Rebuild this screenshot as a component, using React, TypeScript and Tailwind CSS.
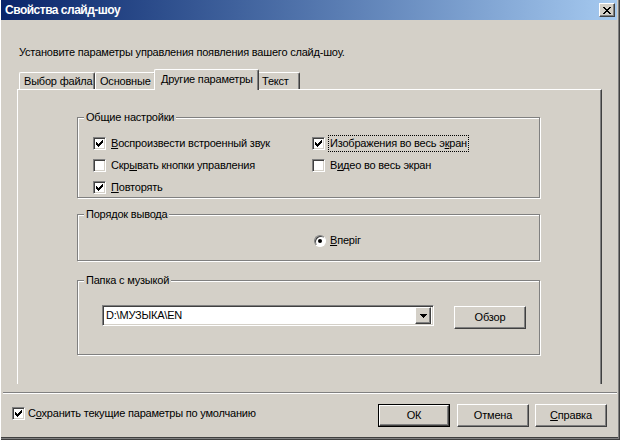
import type { ReactNode } from "react";

const raised =
  "border border-t-white border-l-white border-r-[#404040] border-b-[#404040] shadow-[inset_-1px_-1px_0_#808080]";
const sunken =
  "border border-t-[#808080] border-l-[#808080] border-r-white border-b-white shadow-[inset_1px_1px_0_#404040,inset_-1px_-1px_0_#d4d0c8]";

function CheckMark() {
  return (
    <svg width="7" height="7" viewBox="0 0 7 7" shapeRendering="crispEdges">
      <path
        d="M0 2h1v3h-1zM1 3h1v3h-1zM2 4h1v3h-1zM3 3h1v3h-1zM4 2h1v3h-1zM5 1h1v3h-1zM6 0h1v3h-1z"
        fill="#000"
      />
    </svg>
  );
}

function Box({ checked }: { checked?: boolean }) {
  return (
    <span
      className={`flex h-[13px] w-[13px] shrink-0 items-center justify-center bg-white ${sunken}`}
    >
      {checked && <CheckMark />}
    </span>
  );
}

function CheckRow({
  checked,
  focused,
  children,
}: {
  checked?: boolean;
  focused?: boolean;
  children: ReactNode;
}) {
  return (
    <div className="flex h-[17px] items-center gap-[3px]">
      <Box checked={checked} />
      <span
        className={`whitespace-nowrap border px-[1px] leading-[15px] ${
          focused ? "border-dotted border-black" : "border-transparent"
        }`}
      >
        {children}
      </span>
    </div>
  );
}

function Group({
  title,
  className,
  children,
}: {
  title: string;
  className: string;
  children: ReactNode;
}) {
  return (
    <fieldset
      className={`w-[463px] border border-[#808080] shadow-[1px_1px_0_#ffffff,inset_1px_1px_0_#ffffff] ${className}`}
    >
      <legend className="ml-[6px] bg-[#d4d0c8] px-[2px] leading-[13px]">{title}</legend>
      {children}
    </fieldset>
  );
}

function Button({ children, isDefault }: { children: ReactNode; isDefault?: boolean }) {
  if (isDefault) {
    return (
      <div className="h-[23px] w-[72px] border border-black">
        <div className={`flex h-full w-full items-center justify-center ${raised}`}>
          {children}
        </div>
      </div>
    );
  }
  return (
    <div className={`flex h-[23px] w-[72px] items-center justify-center ${raised}`}>
      {children}
    </div>
  );
}

function Tab({ label, active, w }: { label: string; active?: boolean; w: string }) {
  return (
    <div
      className={`flex items-start whitespace-nowrap rounded-t-[2px] border-t border-l border-white border-r border-r-[#404040] bg-[#d4d0c8] shadow-[inset_-1px_0_0_#808080] ${w} ${
        active
          ? "relative z-10 -mx-[2px] -mb-px h-[21px] pl-[6px] pt-[3px]"
          : "h-[17px] pl-[4px] pt-[2px]"
      }`}
    >
      {label}
    </div>
  );
}

export default function App() {
  return (
    <div className="flex h-[440px] w-[620px] flex-col bg-[#d4d0c8] font-['Liberation_Sans',Arial,sans-serif] text-[11px] leading-[13px] tracking-[-0.2px] text-black shadow-[inset_1px_0_0_#ffffff,inset_-1px_-1px_0_#404040,inset_-2px_-2px_0_#808080,inset_0_-3px_0_#404040]">
      <div className="ml-[1px] mr-[3px] flex h-[20px] items-center justify-between bg-linear-to-r from-[#0a246a] to-[#a6caf0] pl-[4px] pr-[2px]">
        <span className="text-[12px] font-bold tracking-[-0.5px] text-white">
          Свойства слайд-шоу
        </span>
        <div className={`flex h-[14px] w-[16px] items-center justify-center bg-[#d4d0c8] ${raised}`}>
          <svg width="8" height="7" viewBox="0 0 8 7" shapeRendering="crispEdges">
            <path
              d="M0 0h2v1h-2zM6 0h2v1h-2zM1 1h2v1h-2zM5 1h2v1h-2zM2 2h4v1h-4zM3 3h2v1h-2zM2 4h4v1h-4zM1 5h2v1h-2zM5 5h2v1h-2zM0 6h2v1h-2zM6 6h2v1h-2z"
              fill="#000"
            />
          </svg>
        </div>
      </div>

      <p className="ml-[19px] mt-[26px]">
        Установите параметры управления появления вашего слайд-шоу.
      </p>

      <div className="ml-[17px] mt-[10px] flex w-[585px] flex-col">
        <div className="flex h-[20px] items-end pl-[2px]">
          <Tab label="Выбор файла" w="w-[76px]" />
          <Tab label="Основные" w="w-[61px]" />
          <Tab label="Другие параметры" w="w-[105px]" active />
          <Tab label="Текст" w="w-[43px]" />
        </div>
        <div className="h-[295px] border-t border-l border-white border-r border-r-[#404040] pl-[59px] shadow-[inset_-1px_0_0_#808080]">
          <Group title="Общие настройки" className="mt-[21px] pb-[1px] pt-[11px]">
            <div className="grid grid-cols-[219px_1fr] grid-rows-[17px_17px_17px] gap-y-[5px] pl-[15px]">
              <CheckRow checked>
                <span className="underline">В</span>оспроизвести встроенный звук
              </CheckRow>
              <CheckRow checked focused>
                Изображения во весь э<span className="underline">к</span>ран
              </CheckRow>
              <CheckRow>
                Скр<span className="underline">ы</span>вать кнопки управления
              </CheckRow>
              <CheckRow>
                В<span className="underline">и</span>део во весь экран
              </CheckRow>
              <CheckRow checked>
                <span className="underline">П</span>овторять
              </CheckRow>
            </div>
          </Group>

          <Group title="Порядок вывода" className="mt-[10px] pb-[11px] pt-[11px]">
            <div className="flex h-[17px] items-center gap-[4px] pl-[236px]">
              <span className="flex h-[12px] w-[12px] items-center justify-center rounded-full border border-t-[#808080] border-l-[#808080] border-r-white border-b-white bg-white shadow-[inset_1px_1px_0_#404040]">
                <span className="h-[4px] w-[4px] rounded-full bg-black" />
              </span>
              <span>
                <span className="underline">В</span>періг
              </span>
            </div>
          </Group>

          <Group title="Папка с музыкой" className="mt-[13px] pb-[25px] pt-[18px]">
            <div className="flex items-start gap-[20px] pl-[24px]">
              <div className={`flex h-[21px] w-[332px] items-center bg-white pl-[3px] pr-[2px] ${sunken}`}>
                <span className="flex-1">D:\МУЗЫКА\EN</span>
                <div className={`flex h-[17px] w-[16px] items-center justify-center bg-[#d4d0c8] ${raised}`}>
                  <svg width="7" height="4" viewBox="0 0 7 4" shapeRendering="crispEdges">
                    <path d="M0 0h7v1h-1v1h-1v1h-1v1h-1v-1h-1v-1h-1v-1h-1z" fill="#000" />
                  </svg>
                </div>
              </div>
              <div className="mt-[1px]">
                <Button>Обзор</Button>
              </div>
            </div>
          </Group>
        </div>
      </div>

      <div className="mx-[3px] mt-[8px] h-[2px] border-t border-b border-t-[#808080] border-b-white" />

      <div className="mt-[10px] flex items-start pl-[12px] pr-[13px]">
        <div className="mt-[1px] flex h-[17px] items-center gap-[3px]">
          <Box checked />
          <span>
            С<span className="underline">о</span>хранить текущие параметры по умолчанию
          </span>
        </div>
        <div className="ml-auto flex">
          <Button isDefault>ОК</Button>
          <div className="ml-[7px]">
            <Button>Отмена</Button>
          </div>
          <div className="ml-[6px]">
            <Button>
              <span className="underline">С</span>правка
            </Button>
          </div>
        </div>
      </div>
    </div>
  );
}
